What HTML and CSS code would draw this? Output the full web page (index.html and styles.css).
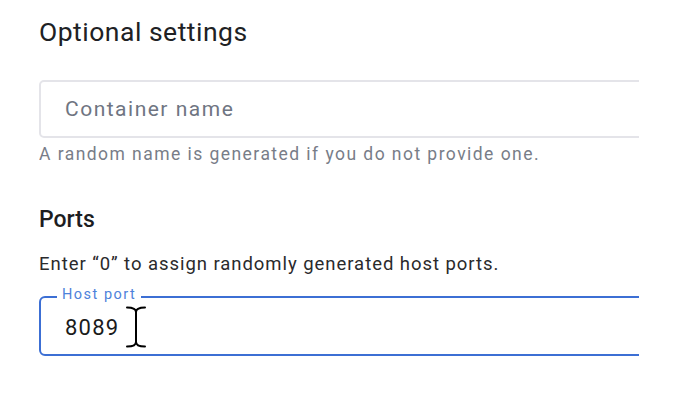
FILE: index.html
```html
<!DOCTYPE html>
<html lang="en">
<head>
<meta charset="utf-8">
<link rel="stylesheet" href="styles.css">
</head>
<body>
<main class="panel">
  <h2 class="title">Optional settings</h2>
  <div class="field">
    <span class="placeholder">Container name</span>
  </div>
  <p class="helper">A random name is generated if you do not provide one.</p>
  <h3 class="subtitle">Ports</h3>
  <p class="desc">Enter “0” to assign randomly generated host ports.</p>
  <div class="outlined">
    <span class="float-label">Host port</span>
    <span class="value">8089</span>
    <svg class="ibeam" width="22" height="42" viewBox="0 0 22 42" fill="none" stroke="#000" stroke-width="2" stroke-linecap="round">
      <path d="M2 1.5 C7 1.5 11 2.5 11 6 C11 2.5 15 1.5 20 1.5"/>
      <path d="M11 6 V36"/>
      <path d="M2 40.5 C7 40.5 11 39.5 11 36 C11 39.5 15 40.5 20 40.5"/>
    </svg>
  </div>
</main>
</body>
</html>
```

FILE: styles.css
```css
* { box-sizing: border-box; }
html, body { margin: 0; background: #fff; }
body {
  font-family: Roboto, "Noto Sans", sans-serif;
  padding-left: 39px;
  padding-top: 17px;
}
.panel {
  width: 600px;
  overflow: hidden;
}
.title {
  margin: 0;
  font-size: 26.5px;
  line-height: 30px;
  font-weight: 400;
  color: #202124;
  letter-spacing: 0.5px;
}
.field {
  margin-top: 33px;
  width: 640px;
  height: 58px;
  border: 2px solid #e4e4e9;
  border-radius: 5px;
  display: flex;
  align-items: center;
  padding-left: 24px;
}
.placeholder {
  font-size: 21px;
  color: #6f7582;
  letter-spacing: 1.5px;
}
.helper {
  margin: 6px 0 0;
  font-size: 17.5px;
  line-height: 20px;
  color: #787d88;
  letter-spacing: 1.45px;
}
.subtitle {
  margin: 42px 0 0;
  font-size: 23px;
  line-height: 28px;
  font-weight: 500;
  color: #1d1d1f;
}
.desc {
  margin: 18px 0 0;
  font-size: 18.5px;
  line-height: 24px;
  color: #2a2a2c;
  letter-spacing: 0.95px;
}
.outlined {
  position: relative;
  margin-top: 20px;
  width: 640px;
  height: 60px;
  border: 2.5px solid #3c6fd4;
  border-radius: 6px;
  display: flex;
  align-items: center;
  padding-left: 24px;
  padding-top: 2px;
}
.float-label {
  position: absolute;
  left: 16px;
  top: -13px;
  padding: 0 5px;
  background: #fff;
  font-size: 14.5px;
  line-height: 20px;
  color: #4d82db;
  letter-spacing: 1.5px;
}
.value {
  font-size: 22px;
  color: #1b1b1b;
  letter-spacing: 1.2px;
}
.ibeam {
  position: absolute;
  left: 84px;
  top: 8px;
}
```
